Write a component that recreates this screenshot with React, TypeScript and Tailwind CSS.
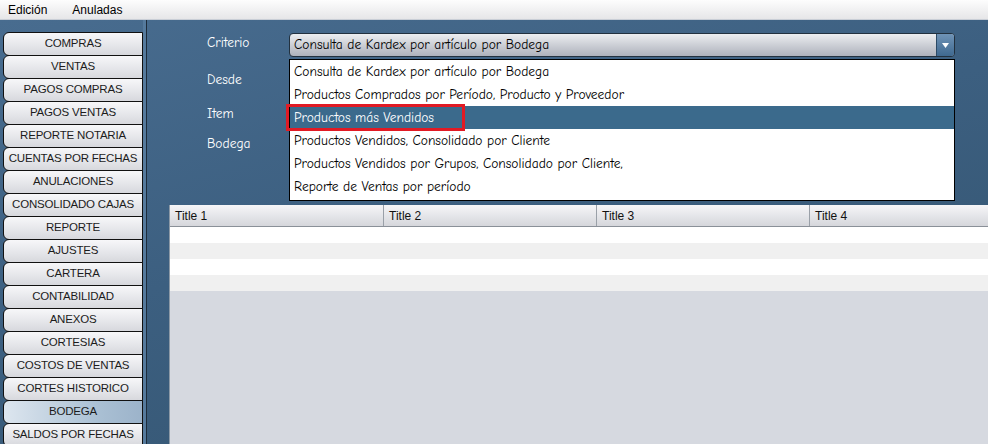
import React from 'react';

const sideItems = [
  'COMPRAS',
  'VENTAS',
  'PAGOS COMPRAS',
  'PAGOS VENTAS',
  'REPORTE NOTARIA',
  'CUENTAS POR FECHAS',
  'ANULACIONES',
  'CONSOLIDADO CAJAS',
  'REPORTE',
  'AJUSTES',
  'CARTERA',
  'CONTABILIDAD',
  'ANEXOS',
  'CORTESIAS',
  'COSTOS DE VENTAS',
  'CORTES HISTORICO',
  'BODEGA',
  'SALDOS POR FECHAS',
];

const options = [
  'Consulta de Kardex por artículo por Bodega',
  'Productos Comprados por Período, Producto y Proveedor',
  'Productos más Vendidos',
  'Productos Vendidos, Consolidado por Cliente',
  'Productos Vendidos por Grupos, Consolidado por Cliente,',
  'Reporte de Ventas por período',
];

const comic = "font-['Comic_Sans_MS','Comic_Neue','DejaVu_Sans',sans-serif]";
const sans = "font-['Liberation_Sans',Arial,sans-serif]";

const SideButton = ({ label, active }: { label: string; active?: boolean }) => (
  <div
    className={`-mt-px flex h-[24px] shrink-0 items-center justify-center whitespace-nowrap rounded-l-[6px] border border-[#111] text-[11.5px] tracking-[-0.2px] text-[#1c1c1c] ${
      active
        ? 'bg-[linear-gradient(90deg,#dde6ef,#a9bfd3_70%,#9cb3ca)]'
        : 'bg-[linear-gradient(180deg,#f7f7f9,#e4e5e9_60%,#d7d8dd)]'
    }`}
  >
    {label}
  </div>
);

export default function App() {
  return (
    <div className={`flex h-[444px] w-[988px] flex-col overflow-hidden ${sans}`}>
      {/* menu bar */}
      <div className="flex h-[20px] shrink-0 items-center gap-[25px] border-b border-[#c9ced6] bg-[linear-gradient(180deg,#fdfdfd,#e6e6e8)] pl-[8px] text-[12px] text-black">
        <span>Edición</span>
        <span>Anuladas</span>
      </div>

      <div className="flex min-h-0 flex-1 bg-[linear-gradient(165deg,#486c8f,#3c5f80_45%,#33546f)]">
        {/* sidebar */}
        <div className="flex w-[143px] shrink-0 flex-col pl-[3px] pt-[13px]">
          {sideItems.map((s) => (
            <SideButton key={s} label={s} active={s === 'BODEGA'} />
          ))}
        </div>
        <div className="w-[3px] shrink-0 bg-[#557a9d]" />
        <div className="w-[1px] shrink-0 bg-[#1d2c3b]" />

        {/* main */}
        <div className="relative flex min-w-0 flex-1 flex-col">
          <div className={`flex flex-col pl-[60px] pt-[13px] text-[13.5px] text-white ${comic}`}>
            <div className="flex h-[24px] items-center">
              <span className="w-[82px] -translate-y-[2px]">Criterio</span>
              <div className="relative flex h-[24px] w-[666px] items-center rounded-[4px] border border-[#22313f] bg-[linear-gradient(180deg,#eceef1,#c9ccd3_55%,#aeb2bc)] pl-[4px] text-black">
                Consulta de Kardex por artículo por Bodega
                <div className="absolute right-0 top-0 flex h-full w-[18px] items-center justify-center rounded-r-[3px] border-l border-[#2b4a66] bg-[linear-gradient(180deg,#6f93b6,#3f6990)]">
                  <svg width="7" height="5" viewBox="0 0 7 5">
                    <path d="M0 0H7L3.5 5Z" fill="#fff" />
                  </svg>
                </div>
              </div>
            </div>
            <div className="mt-[11px] flex h-[24px] items-center">Desde</div>
            <div className="mt-[10px] flex h-[24px] items-center">Item</div>
            <div className="mt-[6px] flex h-[24px] items-center">Bodega</div>
          </div>

          {/* table */}
          <div className="ml-[22px] mt-[49px] flex min-h-0 flex-1 flex-col border-l border-[#8c99a6] bg-[#d6d9e0]">
            <div className="flex h-[22px] shrink-0 border-b border-[#8a9098] bg-[linear-gradient(180deg,#f6f6f8,#e2e3e7_60%,#d5d6db)] text-[12px] text-[#111]">
              {['Title 1', 'Title 2', 'Title 3', 'Title 4'].map((t, i) => (
                <div
                  key={t}
                  className={`flex shrink-0 items-center pl-[5px] ${i === 0 ? 'w-[214px]' : 'w-[213px]'} ${i < 3 ? 'border-r border-[#9aa0a8]' : ''}`}
                >
                  {t}
                </div>
              ))}
            </div>
            <div className="h-[16px] bg-white" />
            <div className="h-[16px] bg-[#f0f0f0]" />
            <div className="h-[16px] bg-white" />
            <div className="h-[16px] bg-[#f0f0f0]" />
          </div>

          {/* open dropdown */}
          <div className={`absolute left-[142px] top-[39px] w-[666px] border border-black bg-white pb-[2px] text-[13.5px] text-black ${comic}`}>
            {options.map((o, i) => (
              <div
                key={o}
                className={`flex h-[23px] items-center pl-[4px] pt-[1px] ${i === 2 ? 'bg-[#3b6a8c] text-white' : ''}`}
              >
                {o}
              </div>
            ))}
            <div className="absolute left-[-4px] top-[44px] h-[27px] w-[179px] border-[3px] border-[#e11a24]" />
          </div>
        </div>
      </div>
    </div>
  );
}
